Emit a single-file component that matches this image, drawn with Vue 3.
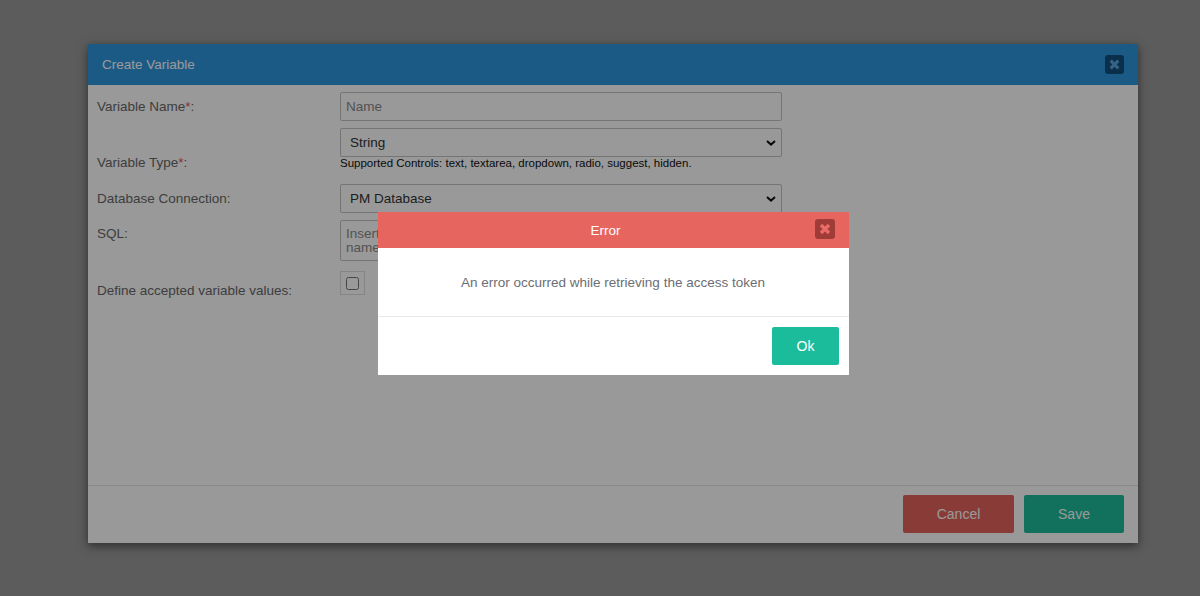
<script setup>
const sqlHint = 'Insert a SQL query like: SELECT [Key_Field], [Label_Field] FROM\nname'
</script>

<template>
  <div class="page">
    <div class="scrim scrim-back"></div>
    <section class="dialog">
      <header class="dialog-head">
        <span class="dialog-title">Create Variable</span>
        <button class="close close-blue" type="button" aria-label="Close">
          <svg viewBox="0 0 20 20" width="19" height="19"><path d="M6 6l8 8M14 6l-8 8" /></svg>
        </button>
      </header>
      <form class="form" @submit.prevent>
        <div class="row row-name">
          <label class="label">Variable Name<span class="req">*</span>:</label>
          <input class="control" type="text" placeholder="Name" />
        </div>
        <div class="row row-type">
          <label class="label">Variable Type<span class="req">*</span>:</label>
          <div class="stack">
            <select class="control select"><option>String</option></select>
            <small class="help">Supported Controls: text, textarea, dropdown, radio, suggest, hidden.</small>
          </div>
        </div>
        <div class="row row-db">
          <label class="label">Database Connection:</label>
          <select class="control select"><option>PM Database</option></select>
        </div>
        <div class="row row-sql">
          <label class="label">SQL:</label>
          <textarea class="control area" :placeholder="sqlHint"></textarea>
        </div>
        <div class="row row-check">
          <label class="label">Define accepted variable values:</label>
          <span class="check-box"><input class="check" type="checkbox" /></span>
        </div>
      </form>
      <footer class="dialog-foot">
        <button class="btn btn-cancel" type="button">Cancel</button>
        <button class="btn btn-save" type="button">Save</button>
      </footer>
    </section>
    <div class="scrim scrim-front"></div>
    <section class="alert">
      <header class="alert-head">
        <span class="alert-title">Error</span>
        <button class="close close-red" type="button" aria-label="Close">
          <svg viewBox="0 0 20 20" width="20" height="20"><path d="M6 6l8 8M14 6l-8 8" /></svg>
        </button>
      </header>
      <p class="alert-body">An error occurred while retrieving the access token</p>
      <footer class="alert-foot">
        <button class="btn btn-ok" type="button">Ok</button>
      </footer>
    </section>
  </div>
</template>

<style scoped>
.page {
  position: relative;
  width: 1200px;
  height: 596px;
  overflow: hidden;
  background: #fff;
  font-family: "Liberation Sans", Arial, sans-serif;
  font-size: 13.5px;
}
.scrim { position: absolute; inset: 0; }
.scrim-back { background: rgba(0, 0, 0, 0.4); }
.scrim-front { background: rgba(0, 0, 0, 0.4); }

.dialog {
  position: absolute;
  left: 88px;
  top: 44px;
  width: 1050px;
  height: 499px;
  display: flex;
  flex-direction: column;
  background: #fff;
  box-shadow: 0 3px 9px rgba(0, 0, 0, 0.5);
}
.dialog-head {
  flex: none;
  height: 41px;
  display: flex;
  align-items: center;
  justify-content: space-between;
  padding: 0 14px;
  background: #3097e0;
  color: #fff;
}
.close {
  display: flex;
  padding: 0;
  border: 0;
  border-radius: 3px;
  color: inherit;
}
.close svg { fill: none; stroke: currentColor; stroke-width: 3.4; }
.close-blue { background: #0f4f7d; color: #5aa5da; margin-top: -1px; }
.close-red { background: #a03c38; color: #e96c66; }

.form {
  flex: 1;
  padding: 7px 357px 0 9px;
  display: flex;
  flex-direction: column;
}
.row {
  display: grid;
  grid-template-columns: 243px 442px;
}
.label { color: #686868; }
.req { color: #d9534f; }
.control {
  box-sizing: border-box;
  width: 442px;
  margin: 0;
  border: 1px solid #c4c4c4;
  border-radius: 2px;
  background: #fff;
  font: 13.5px "Liberation Sans", Arial, sans-serif;
  color: #333;
}
.control::placeholder { color: #8a8a8a; opacity: 1; }
input.control { height: 29px; padding: 0 5px; }
.select {
  display: block;
  height: 29px;
  padding: 0 20px 0 9px;
  appearance: none;
  background: #fff url("data:image/svg+xml,%3Csvg xmlns='http://www.w3.org/2000/svg' width='10' height='6'%3E%3Cpath d='M1 1l4 3.6L9 1' fill='none' stroke='%23111' stroke-width='2'/%3E%3C/svg%3E") no-repeat right 5px center;
}
.area { display: block; height: 41px; padding: 6px 5px 0; line-height: 14px; resize: none; overflow: hidden; }
.row-name { align-items: center; margin-bottom: 7px; }
.row-type { align-items: end; margin-bottom: 14px; }
.row-db { align-items: center; margin-bottom: 7px; }
.row-sql { margin-bottom: 10px; }
.row-sql .label { padding-top: 6px; }
.row-check .label { padding-top: 12px; }
.stack { display: flex; flex-direction: column; }
.help {
  font-size: 11.5px;
  line-height: 13px;
  color: #111;
}
.check-box {
  box-sizing: border-box;
  width: 25px;
  height: 24px;
  display: flex;
  align-items: center;
  justify-content: center;
  border: 1px solid #dedede;
}
.check { width: 13px; height: 13px; margin: 0; }

.dialog-foot {
  flex: none;
  height: 58px;
  box-sizing: border-box;
  display: flex;
  justify-content: flex-end;
  gap: 10px;
  padding: 9px 14px 0;
  border-top: 1px solid #e5e5e5;
}
.btn {
  height: 38px;
  border: 0;
  border-radius: 2px;
  color: #fff;
  font: 14px "Liberation Sans", Arial, sans-serif;
}
.btn-cancel { width: 111px; background: #e4655c; }
.btn-save { width: 100px; background: #1fbc9c; }
.btn-ok { width: 67px; background: #1abc9c; }

.alert {
  position: absolute;
  left: 378px;
  top: 212px;
  width: 471px;
  height: 163px;
  display: flex;
  flex-direction: column;
  background: #fff;
}
.alert-head {
  flex: none;
  position: relative;
  height: 36px;
  display: flex;
  align-items: center;
  justify-content: center;
  padding: 1px 16px 0 0;
  box-sizing: border-box;
  background: #e7655f;
  color: #fff;
}
.close-red { position: absolute; right: 14px; top: 7px; }
.alert-body {
  flex: none;
  height: 69px;
  margin: 0;
  box-sizing: border-box;
  display: flex;
  align-items: center;
  justify-content: center;
  padding-right: 1px;
  border-bottom: 1px solid #e8e8e8;
  color: #6b6e73;
}
.alert-foot {
  flex: 1;
  display: flex;
  justify-content: flex-end;
  padding: 10px 10px 0;
}
</style>
